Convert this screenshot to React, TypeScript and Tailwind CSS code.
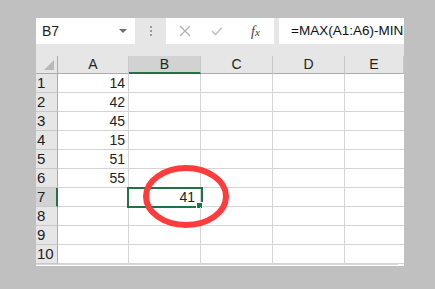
import React from 'react';

const cols = ['A', 'B', 'C', 'D', 'E'];
const values: Record<number, string> = { 1: '14', 2: '42', 3: '45', 4: '15', 5: '51', 6: '55' };

const font = { fontFamily: '"Liberation Sans", Arial, sans-serif' };

export default function App() {
  const rows = Array.from({ length: 10 }, (_, i) => i + 1);

  return (
    <div className="w-[435px] h-[289px] bg-[#c0c0c0] pt-[18px] pl-[36px] overflow-hidden" style={font}>
      <div className="relative w-[368px] h-[248px] bg-white overflow-hidden text-[14px] text-[#222]">
        {/* formula bar */}
        <div className="flex h-[26px] bg-[#e6e6e6]">
          <div className="w-[99px] bg-white flex items-center justify-between pl-[6px] pr-[8px]">
            <span>B7</span>
            <span className="w-0 h-0 border-l-[4px] border-r-[4px] border-t-[4px] border-l-transparent border-r-transparent border-t-[#6d6d6d]" />
          </div>
          <div className="w-[31px] flex flex-col items-center justify-center gap-[2px]">
            <span className="w-[2px] h-[2px] bg-[#9a9a9a]" />
            <span className="w-[2px] h-[2px] bg-[#9a9a9a]" />
            <span className="w-[2px] h-[2px] bg-[#9a9a9a]" />
          </div>
          <div className="w-[108px] bg-white flex items-center">
            <svg width="12" height="12" viewBox="0 0 12 12" className="ml-[13px]">
              <path d="M1 1 L11 11 M11 1 L1 11" stroke="#b4b4b4" strokeWidth="1.4" />
            </svg>
            <svg width="12" height="10" viewBox="0 0 12 10" className="ml-[20px]">
              <path d="M1 5 L4.5 8.5 L11 1.5" stroke="#c4c4c4" strokeWidth="1.6" fill="none" />
            </svg>
            <span
              className="ml-[28px] italic text-[#444] text-[14px]"
              style={{ fontFamily: '"Liberation Serif", "Times New Roman", serif' }}
            >
              f<span className="text-[11px]">x</span>
            </span>
          </div>
          <div className="w-[5px]" />
          <div className="flex-1 bg-white flex items-center pl-[12px] overflow-hidden whitespace-nowrap text-[13.5px] text-[#111]">
            =MAX(A1:A6)-MIN
          </div>
        </div>
        <div className="h-[12px] bg-[#e6e6e6]" />

        {/* grid */}
        <div className="grid grid-cols-[22px_71px_72px_72px_72px_59px]">
          <div className="h-[18px] bg-[#e6e6e6] border-r border-b border-[#ababab] flex items-end justify-end pr-[3px] pb-[3px]">
            <svg width="10" height="10" viewBox="0 0 10 10">
              <path d="M10 0 L10 10 L0 10 Z" fill="#b9b9b9" />
            </svg>
          </div>
          {cols.map((c) =>
            c === 'B' ? (
              <div
                key={c}
                className="h-[18px] bg-[#d2d2d2] border-r border-[#c8c8c8] border-b-2 border-b-[#217346] flex items-center justify-center"
              >
                {c}
              </div>
            ) : (
              <div
                key={c}
                className="h-[18px] bg-[#e6e6e6] border-r border-[#c8c8c8] border-b border-b-[#ababab] flex items-center justify-center"
              >
                {c}
              </div>
            )
          )}

          {rows.map((r) => (
            <React.Fragment key={r}>
              {r === 7 ? (
                <div className="h-[19px] bg-[#d2d2d2] border-r-2 border-r-[#217346] border-b border-b-[#c8c8c8] flex items-center pl-[1px] text-[15px]">
                  {r}
                </div>
              ) : (
                <div className="h-[19px] bg-[#e6e6e6] border-r border-r-[#ababab] border-b border-b-[#c8c8c8] flex items-center pl-[1px] text-[15px]">
                  {r}
                </div>
              )}
              <div className="h-[19px] border-r border-b border-[#d4d4d4] flex items-center justify-end pr-[3px]">
                {values[r] ?? ''}
              </div>
              <div className="relative h-[19px] border-r border-b border-[#d4d4d4] flex items-center justify-end pr-[5px]">
                {r === 7 && (
                  <>
                    41
                    <div className="absolute -left-[2px] -top-[1px] w-[76px] h-[21px] border-2 border-[#217346]" />
                    <div className="absolute -right-[2px] -bottom-[2px] w-[5px] h-[5px] bg-[#217346] outline outline-1 outline-white" />
                  </>
                )}
              </div>
              <div className="h-[19px] border-r border-b border-[#d4d4d4]" />
              <div className="h-[19px] border-r border-b border-[#d4d4d4]" />
              <div className="h-[19px] border-b border-[#d4d4d4]" />
            </React.Fragment>
          ))}
        </div>
        <div className="h-[1px] w-[362px] bg-[#d8d8d8]" />

        <svg className="absolute left-0 top-0 pointer-events-none" width="368" height="248">
          <ellipse cx="150" cy="178.5" rx="40" ry="28.5" fill="none" stroke="#ff3b3b" strokeWidth="6" />
        </svg>
      </div>
    </div>
  );
}
